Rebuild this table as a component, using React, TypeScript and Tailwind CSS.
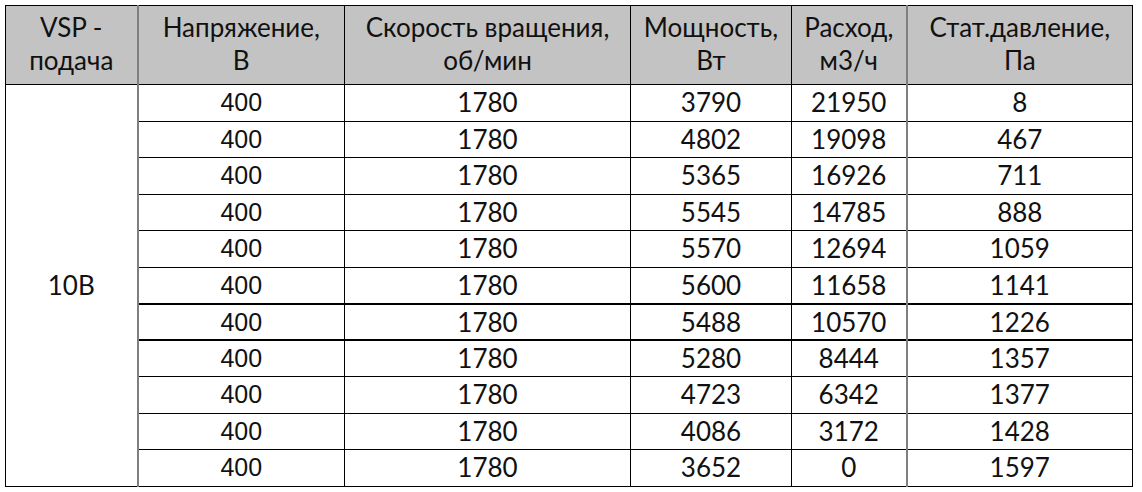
const HEAD = [
  ["VSP -", "подача"],
  ["Напряжение,", "В"],
  ["Скорость вращения,", "об/мин"],
  ["Мощность,", "Вт"],
  ["Расход,", "м3/ч"],
  ["Стат.давление,", "Па"],
];

const ROWS: [number, number, number, number][] = [
  [3790, 21950, 8],
  [4802, 19098, 467],
  [5365, 16926, 711],
  [5545, 14785, 888],
  [5570, 12694, 1059],
  [5600, 11658, 1141],
  [5488, 10570, 1226],
  [5280, 8444, 1357],
  [4723, 6342, 1377],
  [4086, 3172, 1428],
  [3652, 0, 1597],
].map(([p, q, s]) => [1780, p, q, s]);

const calibri = "font-['Lato','Noto_Sans',sans-serif]";

export default function App() {
  return (
    <div className="h-[492px] w-[1142px] overflow-hidden bg-white pl-[5px] pt-[5px] text-[#111]">
      <table className={`w-[1127px] table-fixed border-collapse text-[26px] ${calibri}`}>
        <colgroup>
          <col className="w-[132px]" />
          <col className="w-[207px]" />
          <col className="w-[286px]" />
          <col className="w-[161px]" />
          <col className="w-[115px]" />
          <col className="w-[226px]" />
        </colgroup>
        <thead>
          <tr className="h-[79px] bg-[#c3c3c3]">
            {HEAD.map((h, i) => (
              <th
                key={i}
                className={`border border-black p-0 pt-[5px] text-center align-top font-normal leading-[33px] ${
                  i === 1 || i === 5 ? "border-l-2 border-l-[#7f7f7f]" : ""
                }`}
              >
                {h[0]}
                <br />
                {h[1]}
              </th>
            ))}
          </tr>
        </thead>
        <tbody>
          {ROWS.map((r, i) => {
            const thick = i === 6 || i === 7 ? "border-t-2" : "";
            const td = `border border-black p-0 pt-[4px] text-center align-top leading-[26px] ${thick}`;
            return (
              <tr key={i} className="h-[36.5px]">
                {i === 0 && (
                  <td rowSpan={11} className="border border-black p-0 text-center align-middle leading-[26px]">
                    10В
                  </td>
                )}
                <td className={`${td} border-l-2 border-l-[#7f7f7f] font-['Liberation_Sans',Arial,sans-serif] text-[25px]`}>
                  400
                </td>
                <td className={td}>{r[0]}</td>
                <td className={td}>{r[1]}</td>
                <td className={td}>{r[2]}</td>
                <td className={`${td} border-l-2 border-l-[#7f7f7f]`}>{r[3]}</td>
              </tr>
            );
          })}
        </tbody>
      </table>
    </div>
  );
}
